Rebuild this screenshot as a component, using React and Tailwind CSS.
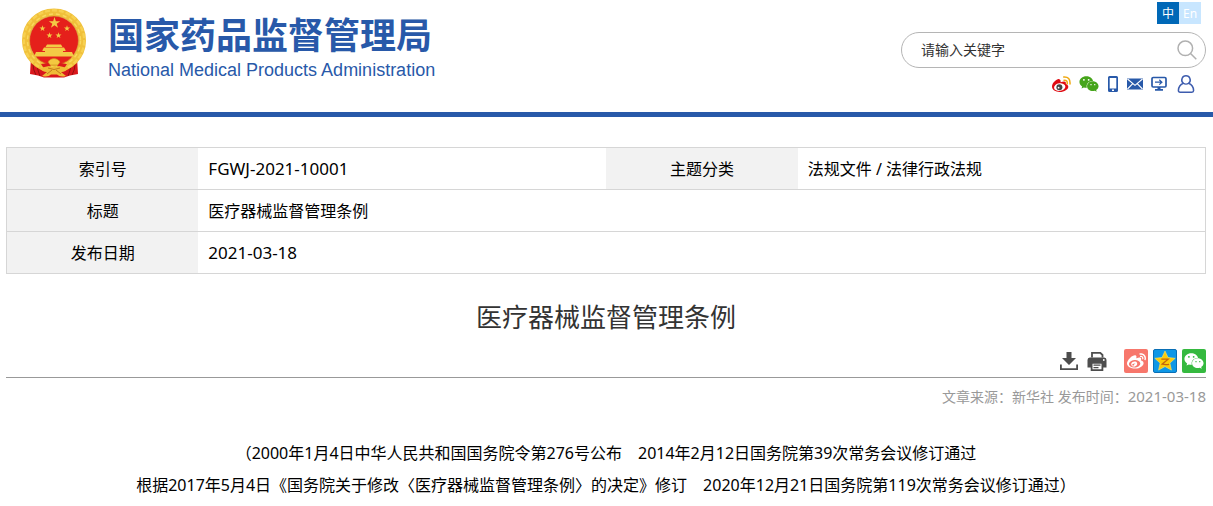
// src/pages/RegulationDetail.jsx
import React, { useState } from "react";
import { FaWeibo, FaWeixin } from "react-icons/fa";

const metaRows = [
  [
    { label: "索引号", value: "FGWJ-2021-10001", latin: true },
    { label: "主题分类", value: "法规文件 / 法律行政法规" },
  ],
  [{ label: "标题", value: "医疗器械监督管理条例" }],
  [{ label: "发布日期", value: "2021-03-18", latin: true }],
];

const STAR = "M0 -1L.225 -.309L.951 -.309L.363 .118L.588 .809L0 .382L-.588 .809L-.363 .118L-.951 -.309L-.225 -.309Z";

function Emblem() {
  return (
    <svg viewBox="0 0 66 70" className="h-[70px] w-[66px]" aria-hidden="true">
      {/* ribbon tails */}
      <path d="M10 50L9 66l8 1.500 6 2h20l6-2 8-1.500-1-16z" fill="#d9171c" />
      <path d="M12 56q0 6 3 11M16 58q1 5 3 10M54 56q0 6-3 11M50 58q-1 5-3 10" fill="none" stroke="#98100f" strokeWidth="1" />
      {/* wheat ring */}
      <circle cx="33" cy="32.500" r="28.200" fill="none" stroke="#f0c03a" strokeWidth="7.600" />
      <circle cx="33" cy="32.500" r="30.200" fill="none" stroke="#f7d050" strokeWidth="2.400" strokeDasharray="5 2" />
      <circle cx="33" cy="32.500" r="26.500" fill="none" stroke="#f9d85e" strokeWidth="1.400" strokeDasharray="4 3" />
      <circle cx="33" cy="32.500" r="24.400" fill="#e5201b" stroke="#d0941f" strokeWidth="0.600" />
      <g fill="#f3cb45">
        <path d={STAR} transform="translate(33.500 15) scale(6)" />
        <path d={STAR} transform="translate(21.500 20.500) scale(3.200)" />
        <path d={STAR} transform="translate(46 20.500) scale(3.200)" />
        <path d={STAR} transform="translate(28.500 27.500) scale(3.200)" />
        <path d={STAR} transform="translate(37.500 27.500) scale(3.200)" />
        {/* gate */}
        <path d="M26 36.500h14l1.500 2.500h-17zM23 39.500h20l1.500 2.500v1h-23v-1zM24 43h18v2H24zM15 44h36l2 4.500H13z" />
      </g>
      {/* gear and knot */}
      <path d="M27 54q2-3.500 6-3.500t6 3.500l-2 3h-8z" fill="#f4c840" stroke="#c98a1c" strokeWidth="0.600" />
      <path d="M20 56l7-1 3 3-6 4zM46 56l-7-1-3 3 6 4z" fill="#dc1a1b" />
      <path d="M19 60l9-2q5 2 10 0l9 2q-2 4-7 4l5 4q-6 1.500-9-1.500h-6q-3 3-9 1.500l5-4q-5 0-7-4z" fill="#efbc37" />
      <path d="M27 60q6 3 12 0M26 66l5-4M40 66l-5-4" fill="none" stroke="#b96a14" strokeWidth="0.800" />
    </svg>
  );
}

function WeiboColor() {
  return (
    <svg viewBox="0 0 20 18" className="h-[18px] w-5" aria-hidden="true">
      <path
        d="M8.300 4.200C6.600 3.100 1 7.500 1 11.600C1 15 4.600 17 8.600 17c5 0 8.700-2.800 8.700-5.300c0-1.600-1.300-2.500-2.500-2.800c.7-2.200-.9-3.400-5.300-1.600c.5-1.500 0-2.700-1.200-3.100z"
        fill="#e00b12"
      />
      <ellipse cx="8.700" cy="12.100" rx="5.700" ry="3.800" fill="#fff" transform="rotate(-8 8.700 12.100)" />
      <circle cx="8.400" cy="12.300" r="3" fill="#454545" />
      <circle cx="7.600" cy="12.700" r="0.900" fill="#fff" />
      <path d="M13 5.200q3.700-.3 3.200 3.600M12.700 2q6.800-.5 6.300 7" fill="none" stroke="#f0a912" strokeWidth="1.500" strokeLinecap="round" />
    </svg>
  );
}

function QzoneIcon() {
  return (
    <svg viewBox="0 0 24 24" className="size-6" aria-hidden="true">
      <rect x="0.500" y="0.500" width="23" height="23" rx="1.500" fill="#0e97e6" stroke="#0a6fb5" />
      <path
        d="M12 2l3 6.500 7.200.8-5.300 4.800 1.500 7L12 17.600 5.600 21.100l1.500-7L1.800 9.300 9 8.500z"
        fill="#fccb08"
        stroke="#fbe46a"
        strokeWidth="0.600"
        strokeLinejoin="round"
      />
      <path d="M8.300 10.200h6.800l-6 5q3.500.8 7 .2" fill="none" stroke="#c4660a" strokeWidth="1.300" />
    </svg>
  );
}

const headerLinks = [
  { label: "微博", icon: <WeiboColor />, box: "w-5" },
  { label: "微信", icon: <FaWeixin className="size-5 text-[#46a51b]" />, box: "ml-2 w-5" },
  {
    label: "手机版",
    box: "ml-2 w-3",
    icon: (
      <svg viewBox="0 0 12 18" className="h-[18px] w-3" aria-hidden="true">
        <path fillRule="evenodd" d="M2.500 1h7Q11 1 11 2.500v13q0 1.500-1.500 1.500h-7Q1 17 1 15.500v-13Q1 1 2.500 1zM2.700 3v10.500h6.600V3zM5 14.500V16h2v-1.500z" fill="#2859a9" />
      </svg>
    ),
  },
  {
    label: "邮箱",
    box: "ml-2 w-4",
    icon: (
      <svg viewBox="0 0 16 12" className="h-3 w-4" aria-hidden="true">
        <path d="M0 .5h16v11H0z" fill="#2859a9" />
        <path d="M.5 1L8 7.300 15.500 1M.5 11l5-5.200M15.500 11l-5-5.200" fill="none" stroke="#fff" strokeWidth="1.100" />
      </svg>
    ),
  },
  {
    label: "客户端",
    box: "ml-2 w-4",
    icon: (
      <svg viewBox="0 0 16 16" className="size-4" aria-hidden="true">
        <rect x="1" y="1.500" width="14" height="9.500" rx="1.200" fill="none" stroke="#2859a9" strokeWidth="1.700" />
        <path d="M4 6.200h6.500M8.300 3.800l2.600 2.400-2.600 2.400" fill="none" stroke="#2859a9" strokeWidth="1.200" />
        <path d="M6.500 11h3v2H12v1.800H4V13h2.500z" fill="#2859a9" />
      </svg>
    ),
  },
  {
    label: "个人中心",
    box: "ml-2.5 w-[18px]",
    icon: (
      <svg viewBox="0 0 18 20" className="h-5 w-[18px]" aria-hidden="true">
        <path
          d="M9 1.800a4.200 4.200 0 0 1 2.600 7.500q4.700 1.700 5 7.200q0 1.700-1.700 1.700H3.100q-1.700 0-1.700-1.700q.3-5.500 5-7.200A4.200 4.200 0 0 1 9 1.800z"
          fill="none"
          stroke="#3d5cae"
          strokeWidth="1.500"
        />
        <path d="M6.200 9.200q2.800 1.700 5.600 0" fill="none" stroke="#3d5cae" strokeWidth="1.300" />
      </svg>
    ),
  },
];

function Header() {
  const [keyword, setKeyword] = useState("");

  return (
    <header className="flex h-[117px] items-start justify-between border-b-[5px] border-[#2859a9] pr-[7px] pl-[21px]">
      <a href="#home" className="flex items-start gap-[21px] pt-2 text-[#2859a9]">
        <Emblem />
        <span className="flex flex-col pt-2">
          <span className="text-4xl leading-10 font-bold">国家药品监督管理局</span>
          <span className="font-['Liberation_Sans',sans-serif] text-lg leading-7">
            National Medical Products Administration
          </span>
        </span>
      </a>

      <div className="flex w-[305px] flex-col items-end pt-0.5">
        <div className="mr-[5px] flex text-xs leading-6 text-white">
          <button type="button" className="h-[22px] w-[22px] bg-[#0068b7]">中</button>
          <button type="button" className="h-[22px] w-[22px] bg-[#c8e6ff]">En</button>
        </div>
        <form
          className="mt-2 flex h-9 w-full items-center rounded-full border border-[#b5b5b5] pr-2 pl-[19px]"
          onSubmit={(e) => e.preventDefault()}
        >
          <input
            type="text"
            aria-label="搜索"
            placeholder="请输入关键字"
            value={keyword}
            onChange={(e) => setKeyword(e.target.value)}
            className="min-w-0 flex-1 text-sm text-[#333] outline-none placeholder:text-[#333]"
          />
          <button type="submit" aria-label="搜索按钮">
            <svg viewBox="0 0 20 20" className="size-5" fill="none" stroke="#b0b0b0" strokeWidth="1.500" aria-hidden="true">
              <circle cx="8.300" cy="8.300" r="7.300" />
              <path d="M13.500 13.500l5.800 5.800" />
            </svg>
          </button>
        </form>
        <nav className="mt-1.5 mr-[11px] flex h-5 items-center">
          {headerLinks.map((link) => (
            <a key={link.label} href="#link" aria-label={link.label} className={`flex justify-center ${link.box}`}>
              {link.icon}
            </a>
          ))}
        </nav>
      </div>
    </header>
  );
}

export default function App() {
  return (
    <div className="min-h-screen bg-white font-['Noto_Sans','Noto_Sans_CJK_SC',sans-serif] text-black">
      <Header />

      <main className="pt-[30px] pr-[7px] pl-1.5">
        {/* Metadata */}
        <table className="w-full table-fixed border-collapse border border-[#d6d6d6]">
          <colgroup>
            <col className="w-[16%]" />
            <col className="w-[34%]" />
            <col className="w-[16%]" />
            <col className="w-[34%]" />
          </colgroup>
          <tbody>
            {metaRows.map((row, idx) => (
              <tr key={idx} className="h-[42px] border-b border-[#d6d6d6]">
                {row.map((cell) => (
                  <React.Fragment key={cell.label}>
                    <th scope="row" className="bg-[#f2f2f2] text-center text-base font-normal">
                      {cell.label}
                    </th>
                    <td colSpan={row.length === 1 ? 3 : 1} className={cell.latin ? "px-2.5 text-[17px]" : "px-2.5 text-base"}>
                      {cell.value}
                    </td>
                  </React.Fragment>
                ))}
              </tr>
            ))}
          </tbody>
        </table>

        <h1 className="mt-[23px] text-center text-[26px] leading-10 text-[#333]">医疗器械监督管理条例</h1>

        {/* Tools */}
        <div className="mt-3 flex h-[29px] items-start justify-end border-b border-[#999]">
          <button type="button" aria-label="下载" className="mr-2">
            <svg viewBox="0 0 20 24" className="h-6 w-5" fill="#4d4d4d" aria-hidden="true">
              <path d="M7.500 3h5v6h4.500L10 16 3 9h4.500z" />
              <path d="M1 15.500h1.800v3.700h14.400v-3.700H19v5.500H1z" />
            </svg>
          </button>
          <button type="button" aria-label="打印" className="mr-[17px]">
            <svg viewBox="0 0 20 24" className="h-6 w-5" aria-hidden="true">
              <path d="M5 8.500V3.900h8.300L15.500 6v2.500" fill="none" stroke="#4d4d4d" strokeWidth="1.800" />
              <path d="M2.800 8.500h14.400Q19.500 8.500 19.500 11v7.500H.5V11q0-2.500 2.300-2.500z" fill="#4d4d4d" />
              <circle cx="16.800" cy="11" r="0.900" fill="#fff" />
              <path d="M4.600 13.800h10.800v7.300H4.600z" fill="#fff" stroke="#4d4d4d" strokeWidth="1.800" />
              <path d="M6.500 16.200h7M6.500 18.600h5" stroke="#4d4d4d" strokeWidth="1.200" />
            </svg>
          </button>
          <div className="flex gap-[5px]">
            <a href="#weibo" aria-label="分享到微博" className="flex size-6 items-center justify-center rounded-xs bg-[#f7776c]">
              <FaWeibo className="size-[19px] text-white" />
            </a>
            <a href="#qzone" aria-label="分享到QQ空间">
              <QzoneIcon />
            </a>
            <a href="#weixin" aria-label="分享到微信" className="flex size-6 items-center justify-center rounded-xs bg-[#35b93f]">
              <FaWeixin className="size-5 text-white" />
            </a>
          </div>
        </div>
        <p className="mt-1.5 text-right text-sm leading-6 text-[#999]">
          文章来源：新华社 发布时间：<time className="text-[15px]">2021-03-18</time>
        </p>

        {/* Article */}
        <article className="mt-7 text-center text-base leading-8">
          <p>（2000年1月4日中华人民共和国国务院令第276号公布　2014年2月12日国务院第39次常务会议修订通过</p>
          <p>根据2017年5月4日《国务院关于修改〈医疗器械监督管理条例〉的决定》修订　2020年12月21日国务院第119次常务会议修订通过）</p>
        </article>
      </main>
    </div>
  );
}
